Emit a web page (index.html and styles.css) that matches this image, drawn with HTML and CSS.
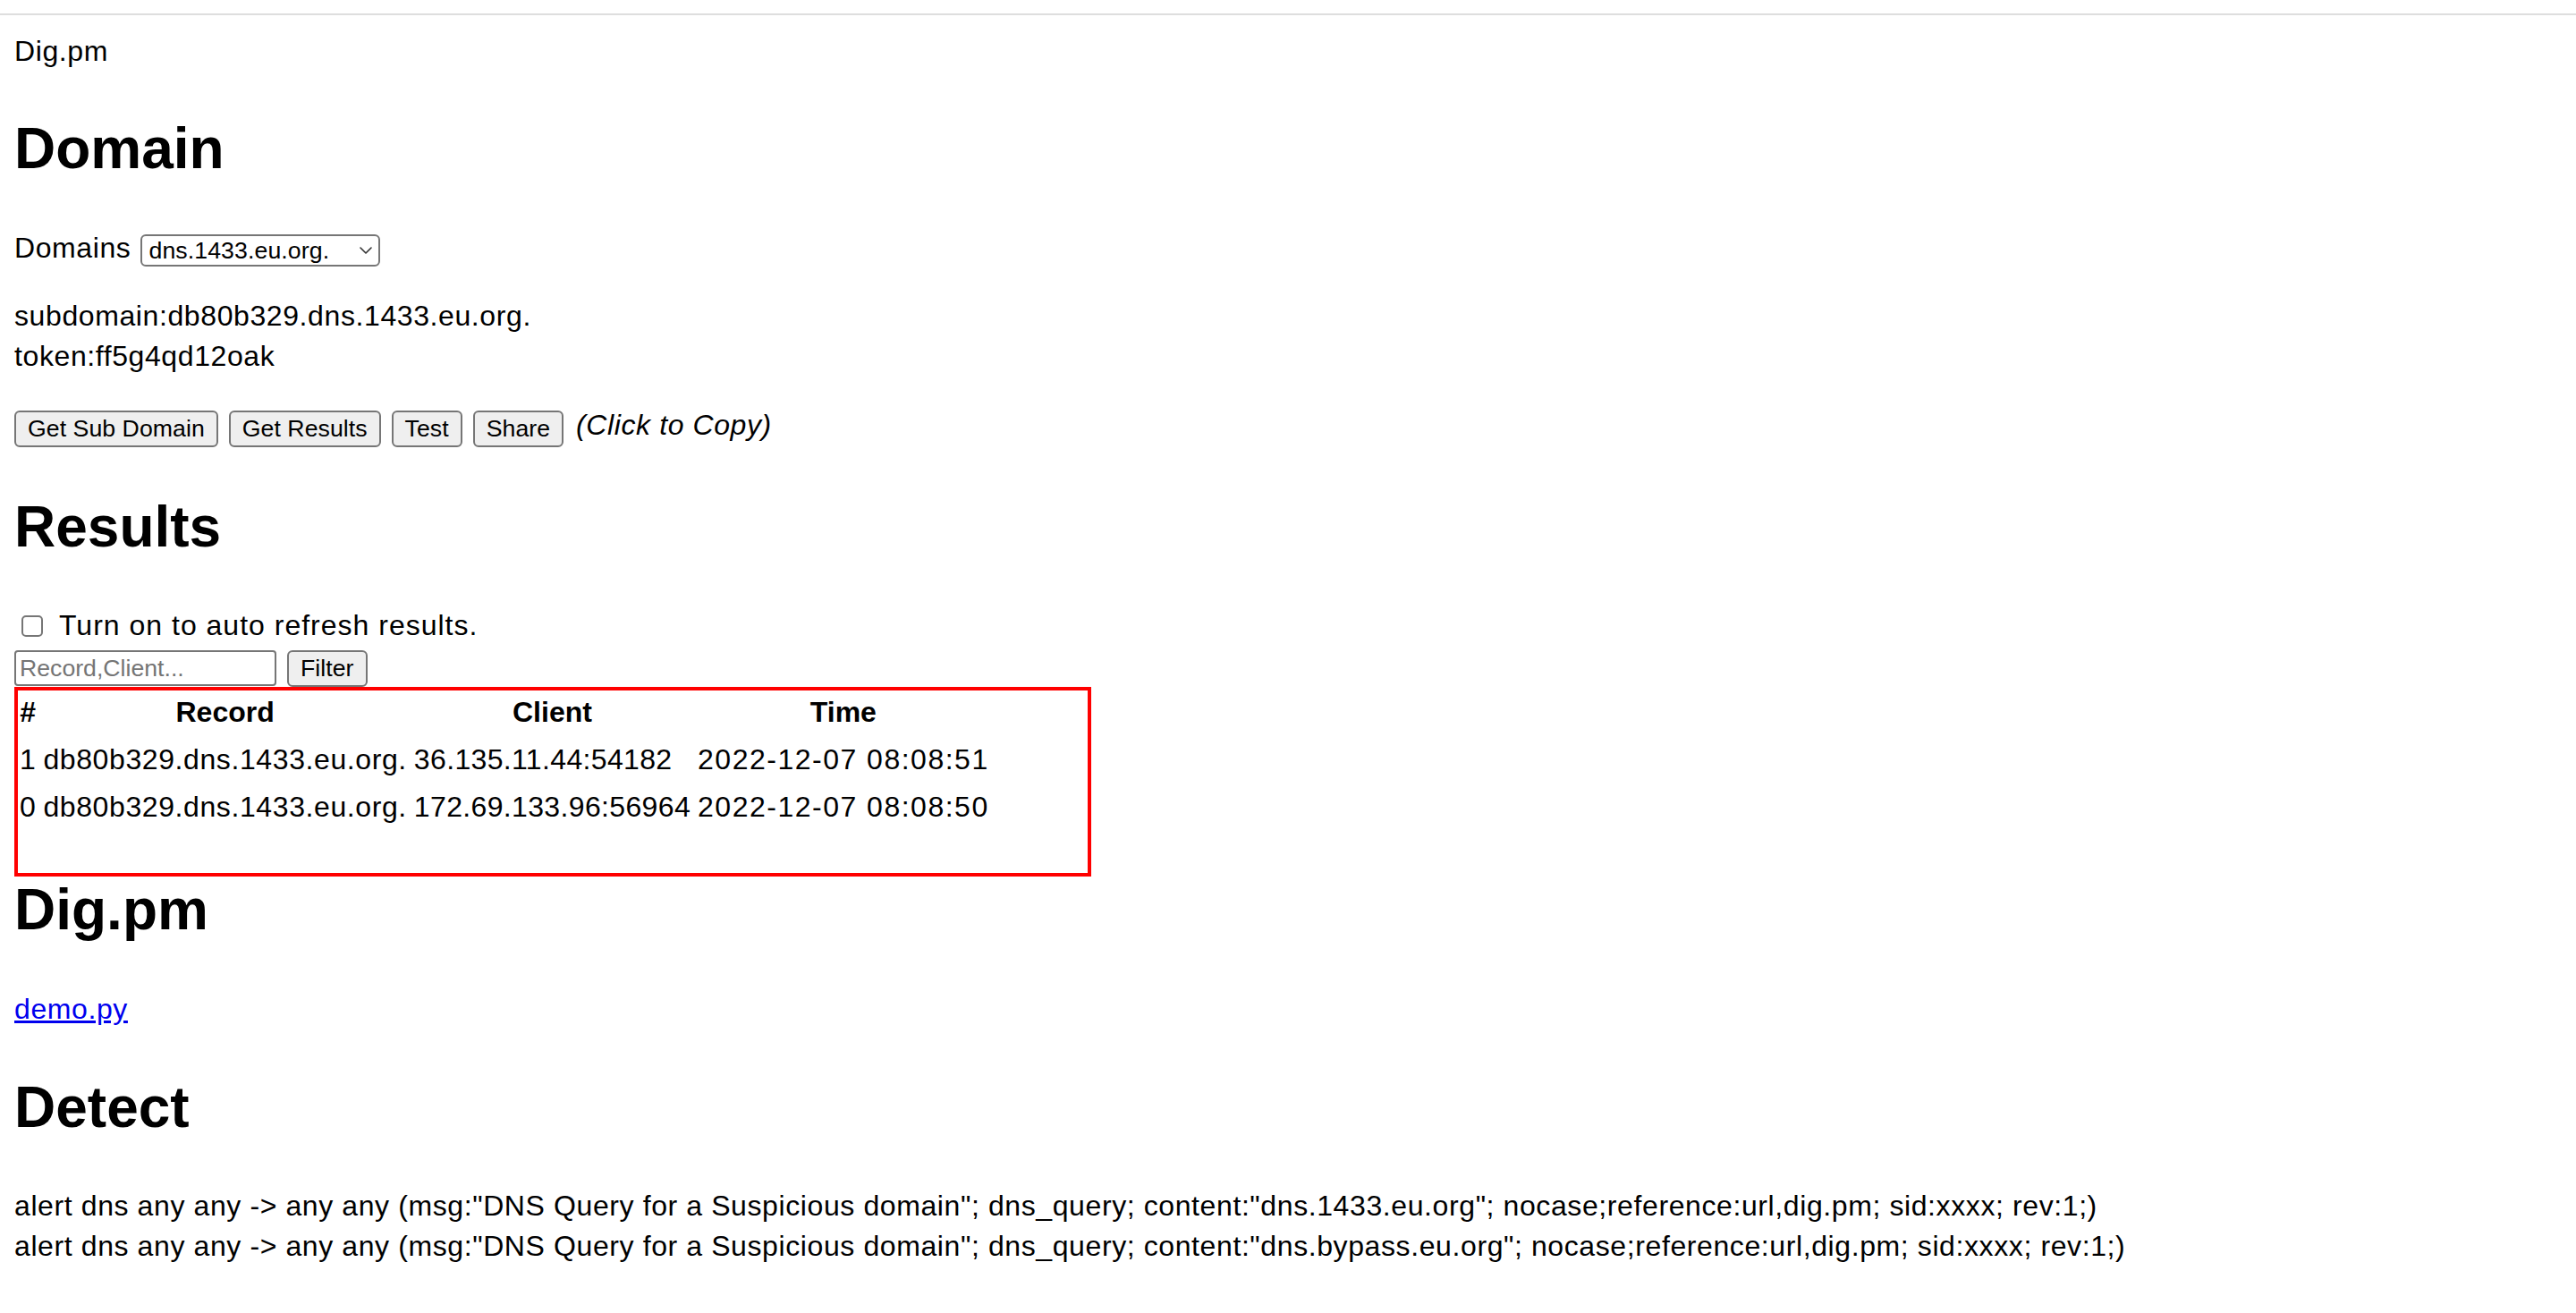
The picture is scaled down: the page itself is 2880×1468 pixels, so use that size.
FILE: index.html
```html
<!DOCTYPE html>
<html lang="en">
<head>
<meta charset="utf-8">
<title>Dig.pm</title>
<link rel="stylesheet" href="styles.css">
</head>
<body class="doc">
<div class="topline"></div>
<main class="page">
  <div class="brand">Dig.pm</div>

  <h1 class="title">Domain</h1>
  <div class="domains-row">
    <span class="label">Domains</span>
    <span class="select-wrap">
      <select class="select"><option>dns.1433.eu.org.</option><option>dns.bypass.eu.org.</option></select>
      <svg class="chev" width="14" height="8" viewBox="0 0 14 8"><path d="M1 1 L7 7 L13 1" fill="none" stroke="#333" stroke-width="1.6" stroke-linecap="round" stroke-linejoin="round"/></svg>
    </span>
  </div>
  <p class="para">subdomain:db80b329.dns.1433.eu.org.<br>token:ff5g4qd12oak</p>
  <div class="actions">
    <button class="btn">Get Sub Domain</button>
    <button class="btn">Get Results</button>
    <button class="btn">Test</button>
    <button class="btn">Share</button>
    <i class="hint">(Click to Copy)</i>
  </div>

  <h1 class="title">Results</h1>
  <label class="refresh"><input type="checkbox" class="check"><span>Turn on to auto refresh results.</span></label>
  <div class="filter-row">
    <input class="filter-input" type="text" placeholder="Record,Client...">
    <button class="btn btn-filter">Filter</button>
  </div>
  <div class="results">
    <table class="result-table">
      <thead>
        <tr><th>#</th><th>Record</th><th>Client</th><th>Time</th></tr>
      </thead>
      <tbody>
        <tr><td>1</td><td>db80b329.dns.1433.eu.org.</td><td class="client">36.135.11.44:54182</td><td class="time">2022-12-07 08:08:51</td></tr>
        <tr><td>0</td><td>db80b329.dns.1433.eu.org.</td><td class="client">172.69.133.96:56964</td><td class="time">2022-12-07 08:08:50</td></tr>
      </tbody>
    </table>
    <div class="highlight"></div>
  </div>

  <h1 class="title">Dig.pm</h1>
  <p class="para"><a class="link" href="#">demo.py</a></p>

  <h1 class="title">Detect</h1>
  <p class="para">alert dns any any -&gt; any any (msg:"DNS Query for a Suspicious domain"; dns_query; content:"dns.1433.eu.org"; nocase;reference:url,dig.pm; sid:xxxx; rev:1;)<br>alert dns any any -&gt; any any (msg:"DNS Query for a Suspicious domain"; dns_query; content:"dns.bypass.eu.org"; nocase;reference:url,dig.pm; sid:xxxx; rev:1;)</p>
</main>
</body>
</html>
```

FILE: styles.css
```css
html, body {
  margin: 0;
  padding: 0;
  background: #ffffff;
}

.doc {
  font-family: "Liberation Sans", Arial, Helvetica, sans-serif;
  font-size: 32px;
  line-height: 1.4;
  letter-spacing: 0.6px;
  color: #000000;
}

.topline {
  height: 15px;
  border-bottom: 2px solid #dedede;
}

.page {
  padding: 0 16px 40px 16px;
}

.brand {
  margin-top: 17.5px;
}

.title {
  font-size: 64px;
  font-weight: bold;
  margin: 42.88px 0;
  line-height: 1.4;
  letter-spacing: 0;
}

.para {
  margin: 32px 0;
}

.domains-row {
  display: flex;
  align-items: flex-start;
  height: 44.8px;
  margin: 32px 0;
}

.select-wrap {
  position: relative;
  margin-left: 11px;
  margin-top: 7.3px;
  display: block;
  width: 268px;
  height: 36px;
}

.select {
  -webkit-appearance: none;
  appearance: none;
  display: block;
  box-sizing: border-box;
  width: 268px;
  height: 36px;
  margin: 0;
  padding: 0 0 0 7px;
  border: 2px solid #767676;
  border-radius: 6px;
  background: #ffffff;
  color: #000000;
  font-family: "Liberation Sans", Arial, sans-serif;
  font-size: 26.67px;
  letter-spacing: 0.1px;
  line-height: 32px;
}

.chev {
  position: absolute;
  right: 9px;
  top: 14px;
  display: block;
  pointer-events: none;
}

.actions {
  display: flex;
  align-items: flex-start;
  gap: 12px;
  height: 49px;
  margin: 32px 0;
}

.btn {
  -webkit-appearance: none;
  appearance: none;
  box-sizing: border-box;
  height: 41px;
  margin: 6px 0 0 0;
  padding: 0 13px;
  border: 2px solid #767676;
  border-radius: 6px;
  background: #efefef;
  color: #000000;
  font-family: "Liberation Sans", Arial, sans-serif;
  font-size: 26.67px;
  letter-spacing: 0.05px;
  line-height: 1;
  white-space: nowrap;
}

.hint {
  font-style: italic;
  margin-left: 2px;
}

.refresh {
  display: flex;
  align-items: center;
  height: 44.8px;
  margin: 0;
  letter-spacing: 1px;
}

.check {
  -webkit-appearance: none;
  appearance: none;
  box-sizing: border-box;
  width: 24px;
  height: 24px;
  margin: 0 18px 0 8px;
  border: 2px solid #767676;
  border-radius: 5px;
  background: #ffffff;
}

.filter-row {
  display: flex;
  align-items: flex-start;
  gap: 12px;
  height: 41px;
  padding-top: 5px;
}

.filter-input {
  box-sizing: border-box;
  width: 293px;
  height: 40px;
  margin: 0;
  padding: 0 4px;
  border: 2px solid #767676;
  border-radius: 4px;
  background: #ffffff;
  font-family: "Liberation Sans", Arial, sans-serif;
  font-size: 26.67px;
  color: #000000;
  outline: none;
}

.filter-input::placeholder {
  color: #757575;
}

.btn-filter {
  margin-top: 0;
}

.results {
  position: relative;
}

.result-table {
  border-spacing: 4px;
  margin: 0;
}

.result-table th,
.result-table td {
  padding: 2px;
  line-height: 44.8px;
  white-space: nowrap;
}

.result-table td {
  text-align: left;
}

.result-table th {
  font-weight: bold;
  text-align: center;
  letter-spacing: 0;
}

.result-table .client {
  letter-spacing: 0.35px;
}

.result-table .time {
  letter-spacing: 1.5px;
}

.highlight {
  position: absolute;
  left: 0;
  top: 0;
  width: 1204px;
  height: 212px;
  box-sizing: border-box;
  border: 4px solid #ff0000;
  pointer-events: none;
}

.link {
  color: #0000ee;
  text-decoration: underline;
}
```
